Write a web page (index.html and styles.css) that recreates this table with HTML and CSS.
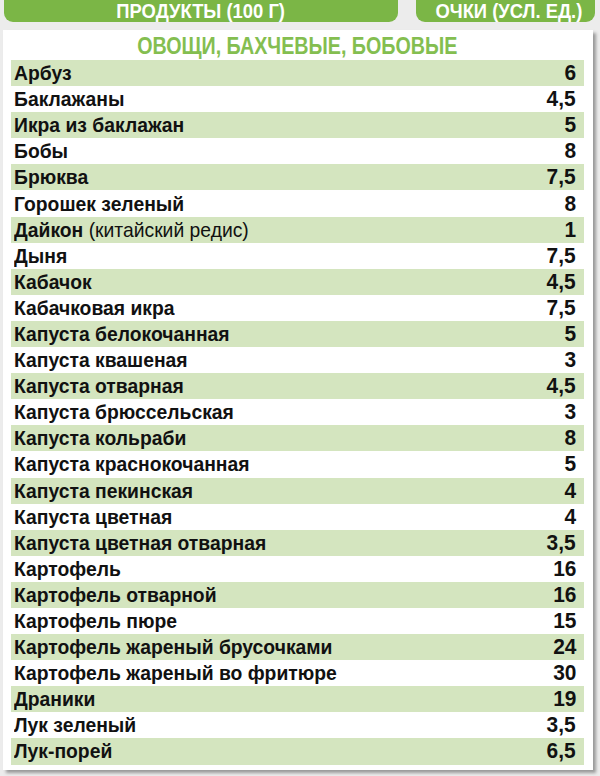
FILE: index.html
```html
<!DOCTYPE html>
<html lang="ru">
<head>
<meta charset="utf-8">
<title>Овощи, бахчевые, бобовые</title>
<link rel="stylesheet" href="styles.css">
</head>
<body>
<div class="header">
  <div class="hbar hbar-left"><span class="cond">ПРОДУКТЫ (100 Г)</span></div>
  <div class="hbar hbar-right"><span class="cond">ОЧКИ (УСЛ. ЕД.)</span></div>
</div>
<div class="card">
  <div class="title"><span class="tcond">ОВОЩИ, БАХЧЕВЫЕ, БОБОВЫЕ</span></div>
  <div class="rows">
    <div class="row alt"><span class="name">Арбуз</span><span class="val">6</span></div>
    <div class="row"><span class="name">Баклажаны</span><span class="val">4,5</span></div>
    <div class="row alt"><span class="name">Икра из баклажан</span><span class="val">5</span></div>
    <div class="row"><span class="name">Бобы</span><span class="val">8</span></div>
    <div class="row alt"><span class="name">Брюква</span><span class="val">7,5</span></div>
    <div class="row"><span class="name">Горошек зеленый</span><span class="val">8</span></div>
    <div class="row alt"><span class="name">Дайкон <span class="note">(китайский редис)</span></span><span class="val">1</span></div>
    <div class="row"><span class="name">Дыня</span><span class="val">7,5</span></div>
    <div class="row alt"><span class="name">Кабачок</span><span class="val">4,5</span></div>
    <div class="row"><span class="name">Кабачковая икра</span><span class="val">7,5</span></div>
    <div class="row alt"><span class="name">Капуста белокочанная</span><span class="val">5</span></div>
    <div class="row"><span class="name">Капуста квашеная</span><span class="val">3</span></div>
    <div class="row alt"><span class="name">Капуста отварная</span><span class="val">4,5</span></div>
    <div class="row"><span class="name">Капуста брюссельская</span><span class="val">3</span></div>
    <div class="row alt"><span class="name">Капуста кольраби</span><span class="val">8</span></div>
    <div class="row"><span class="name">Капуста краснокочанная</span><span class="val">5</span></div>
    <div class="row alt"><span class="name">Капуста пекинская</span><span class="val">4</span></div>
    <div class="row"><span class="name">Капуста цветная</span><span class="val">4</span></div>
    <div class="row alt"><span class="name">Капуста цветная отварная</span><span class="val">3,5</span></div>
    <div class="row"><span class="name">Картофель</span><span class="val">16</span></div>
    <div class="row alt"><span class="name">Картофель отварной</span><span class="val">16</span></div>
    <div class="row"><span class="name">Картофель пюре</span><span class="val">15</span></div>
    <div class="row alt"><span class="name">Картофель жареный брусочками</span><span class="val">24</span></div>
    <div class="row"><span class="name">Картофель жареный во фритюре</span><span class="val">30</span></div>
    <div class="row alt"><span class="name">Драники</span><span class="val">19</span></div>
    <div class="row"><span class="name">Лук зеленый</span><span class="val">3,5</span></div>
    <div class="row alt"><span class="name">Лук-порей</span><span class="val">6,5</span></div>
  </div>
</div>
</body>
</html>
```
FILE: styles.css
```css
html, body {
  margin: 0;
  padding: 0;
}
body {
  width: 600px;
  height: 776px;
  overflow: hidden;
  background: #ececec;
  font-family: "Liberation Sans", Arial, sans-serif;
}
.cond {
  display: inline-block;
  transform: scaleX(0.92);
  transform-origin: center;
  white-space: nowrap;
}
.tcond {
  display: inline-block;
  transform: scaleX(0.82);
  transform-origin: center;
  white-space: nowrap;
}
.header {
  display: flex;
  padding: 0 5px 0 4px;
  gap: 18px;
  height: 22px;
}
.hbar {
  background: #7bb646;
  color: #ffffff;
  font-weight: bold;
  font-size: 20px;
  line-height: 22px;
  text-align: center;
  border-radius: 0 0 9px 9px;
  overflow: hidden;
}
.hbar-left {
  width: 394px;
}
.hbar-right {
  flex: 1;
  padding-left: 6px;
}
.card {
  margin: 8px 7px 0 3px;
  height: 740px;
  background: #ffffff;
  box-shadow: 3px 3px 3px #9a9a9a;
  padding: 0 9px 0 8px;
  box-sizing: border-box;
}
.title {
  height: 30px;
  line-height: 31px;
  text-align: center;
  color: #84be50;
  font-weight: bold;
  font-size: 24px;
  overflow: hidden;
}
.rows {
  display: flex;
  flex-direction: column;
}
.row {
  display: flex;
  justify-content: space-between;
  align-items: center;
  height: 26.1px;
  padding: 0 8px 0 3px;
  font-weight: bold;
  font-size: 21px;
  color: #111111;
}
.name {
  display: inline-block;
  white-space: nowrap;
  transform: scaleX(0.92);
  transform-origin: left center;
}
.val {
  display: inline-block;
  white-space: nowrap;
  font-size: 22px;
  transform: scaleX(0.95);
  transform-origin: right center;
}
.row.alt {
  background: #d4e5bf;
}
.note {
  font-weight: normal;
}
```
